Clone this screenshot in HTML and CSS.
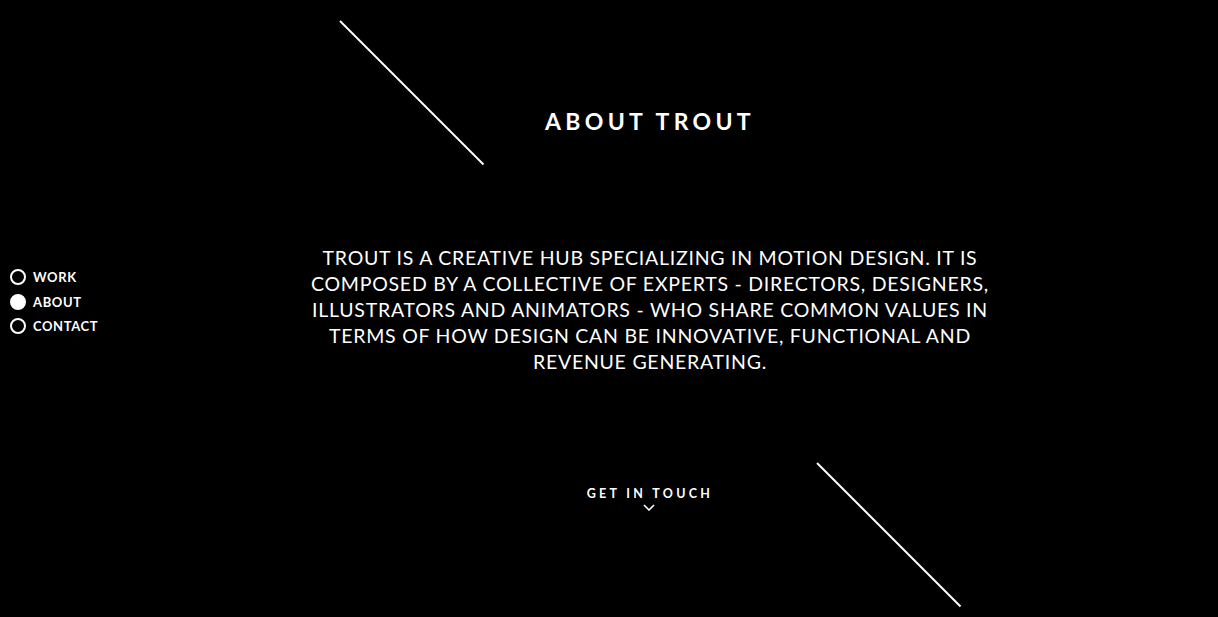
FILE: index.html
```html
<!DOCTYPE html>
<html>
<head>
<meta charset="utf-8">
<link rel="stylesheet" href="styles.css">
</head>
<body>
<div class="page">
  <svg class="lines" width="1218" height="617" viewBox="0 0 1218 617">
    <line x1="340" y1="21" x2="483.5" y2="164.5" stroke="#fff" stroke-width="2"/>
    <line x1="817" y1="463" x2="960.5" y2="606.5" stroke="#fff" stroke-width="2"/>
  </svg>
  <nav class="nav">
    <a class="nav-item"><span class="dot"></span>WORK</a>
    <a class="nav-item active"><span class="dot"></span>ABOUT</a>
    <a class="nav-item"><span class="dot"></span>CONTACT</a>
  </nav>
  <main class="main">
    <h1 class="title">ABOUT TROUT</h1>
    <p class="text">TROUT IS A CREATIVE HUB SPECIALIZING IN MOTION DESIGN. IT IS COMPOSED BY A COLLECTIVE OF EXPERTS - DIRECTORS, DESIGNERS, ILLUSTRATORS AND ANIMATORS - WHO SHARE COMMON VALUES IN TERMS OF HOW DESIGN CAN BE INNOVATIVE, FUNCTIONAL AND REVENUE GENERATING.</p>
    <a class="touch">GET IN TOUCH
      <svg class="chev" width="12" height="7" viewBox="0 0 12 7"><path d="M1 1 L6 6 L11 1" fill="none" stroke="#fff" stroke-width="1.6"/></svg>
    </a>
  </main>
</div>
</body>
</html>
```
FILE: styles.css
```css
html, body {
  margin: 0;
  padding: 0;
  background: #000;
  color: #fff;
  font-family: Lato, "Open Sans", sans-serif;
}
.page {
  position: relative;
  width: 1218px;
  height: 617px;
  overflow: hidden;
  display: flex;
}
.lines {
  position: absolute;
  left: 0;
  top: 0;
}
.nav {
  width: 82px;
  flex: none;
  display: flex;
  flex-direction: column;
  justify-content: center;
  gap: 8.5px;
  padding-left: 10px;
  box-sizing: border-box;
  margin-top: -14px;
}
.nav-item {
  display: flex;
  align-items: center;
  gap: 7px;
  font-size: 13px;
  font-weight: 700;
  letter-spacing: 0.6px;
  white-space: nowrap;
  line-height: 16px;
}
.dot {
  width: 12px;
  height: 12px;
  border: 2px solid #fff;
  border-radius: 50%;
  flex: none;
}
.active .dot {
  background: #fff;
}
.main {
  flex: 1;
  display: flex;
  flex-direction: column;
  align-items: center;
  position: relative;
}
.title {
  margin: 106px 0 0;
  font-size: 23px;
  font-weight: 700;
  letter-spacing: 4.3px;
  line-height: 30px;
  padding-left: 0;
}
.text {
  margin: 109px 0 0;
  width: 700px;
  text-align: center;
  font-size: 19.5px;
  font-weight: 400;
  line-height: 26px;
  letter-spacing: 0.75px;
}
.touch {
  margin-top: 112px;
  display: flex;
  flex-direction: column;
  align-items: center;
  font-size: 12.5px;
  font-weight: 700;
  letter-spacing: 3.3px;
  line-height: 14px;
  padding-left: 0;
}
.chev {
  margin-top: 3px;
  margin-left: -3px;
}
```
